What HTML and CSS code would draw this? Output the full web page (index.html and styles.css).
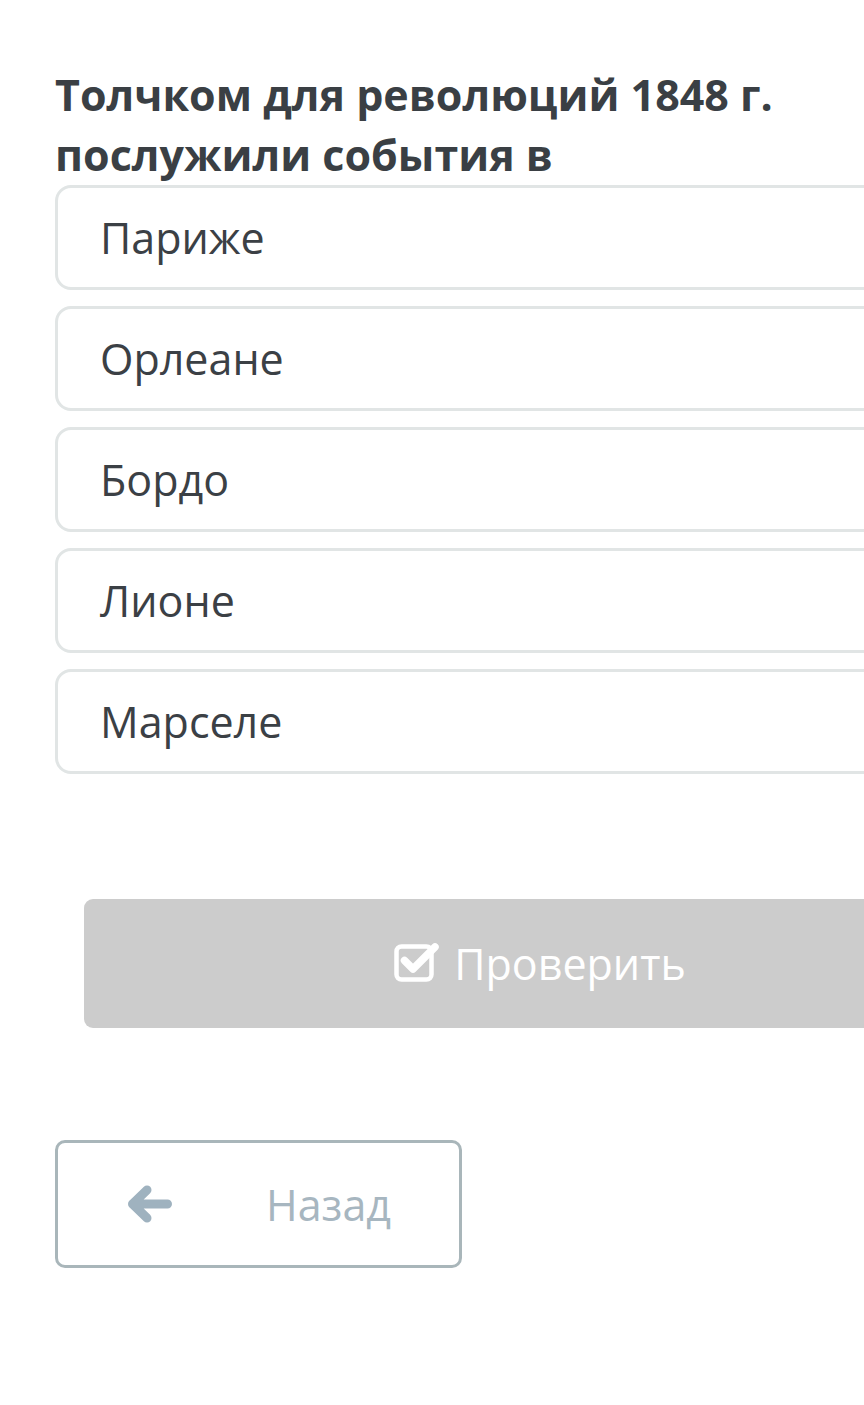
FILE: index.html
```html
<!DOCTYPE html>
<html lang="ru">
<head>
<meta charset="utf-8">
<link rel="stylesheet" href="styles.css">
</head>
<body>
<div class="page">
  <h1 class="question">Толчком для революций 1848 г. послужили события в</h1>
  <div class="options">
    <div class="option">Париже</div>
    <div class="option">Орлеане</div>
    <div class="option">Бордо</div>
    <div class="option">Лионе</div>
    <div class="option">Марселе</div>
  </div>
  <div class="check-row">
    <button class="check-btn">
      <svg class="check-icon" viewBox="0 0 46 42" width="46" height="42">
        <rect x="2.5" y="6.5" width="35" height="33" rx="5" fill="none" stroke="#fff" stroke-width="4.5"/>
        <path d="M10.5 20.5 L19 29 L41 7" fill="none" stroke="#fff" stroke-width="7.5" stroke-linecap="round" stroke-linejoin="round"/>
      </svg>
      <span>Проверить</span>
    </button>
  </div>
  <button class="back-btn">
    <svg class="back-icon" viewBox="0 0 44 38" width="44" height="38">
      <path d="M4.5 19 L19 5 M4.5 19 L19 33 M6 19 L39.5 19" fill="none" stroke="#9fb2bf" stroke-width="9" stroke-linecap="round" stroke-linejoin="round"/>
    </svg>
    <span>Назад</span>
  </button>
</div>
</body>
</html>
```

FILE: styles.css
```css
html, body {
  margin: 0;
  padding: 0;
  background: #fff;
  overflow: hidden;
}
.page {
  width: 1000px;
  padding: 65px 0 0 55px;
  font-family: "Open Sans", "Noto Sans", sans-serif;
}
.question {
  margin: 0;
  width: 790px;
  font-size: 43px;
  line-height: 60px;
  font-weight: 700;
  color: #3a3f44;
}
.options {
  display: flex;
  flex-direction: column;
  gap: 16px;
  margin-top: 0;
}
.option {
  box-sizing: border-box;
  width: 900px;
  height: 105px;
  border: 3px solid #e1e5e5;
  border-radius: 16px;
  padding-left: 42px;
  display: flex;
  align-items: center;
  font-size: 43px;
  color: #3b4045;
}
.check-row {
  margin-top: 125px;
  padding-left: 29px;
}
.check-btn {
  box-sizing: border-box;
  width: 912px;
  height: 129px;
  border: none;
  border-radius: 9px;
  background: #cccccc;
  display: flex;
  align-items: center;
  justify-content: center;
  gap: 14px;
  font-family: inherit;
  font-size: 43px;
  color: #fff;
  padding: 0;
}
.check-icon {
  display: block;
  margin-top: -6px;
}
.back-btn {
  box-sizing: border-box;
  margin-top: 112px;
  width: 407px;
  height: 128px;
  border: 3px solid #a9b6ba;
  border-radius: 10px;
  background: #fff;
  display: flex;
  align-items: center;
  padding: 0 0 0 70px;
  gap: 94px;
  font-family: inherit;
  font-size: 43px;
  color: #a7b6c0;
}
.back-icon {
  display: block;
}
```
